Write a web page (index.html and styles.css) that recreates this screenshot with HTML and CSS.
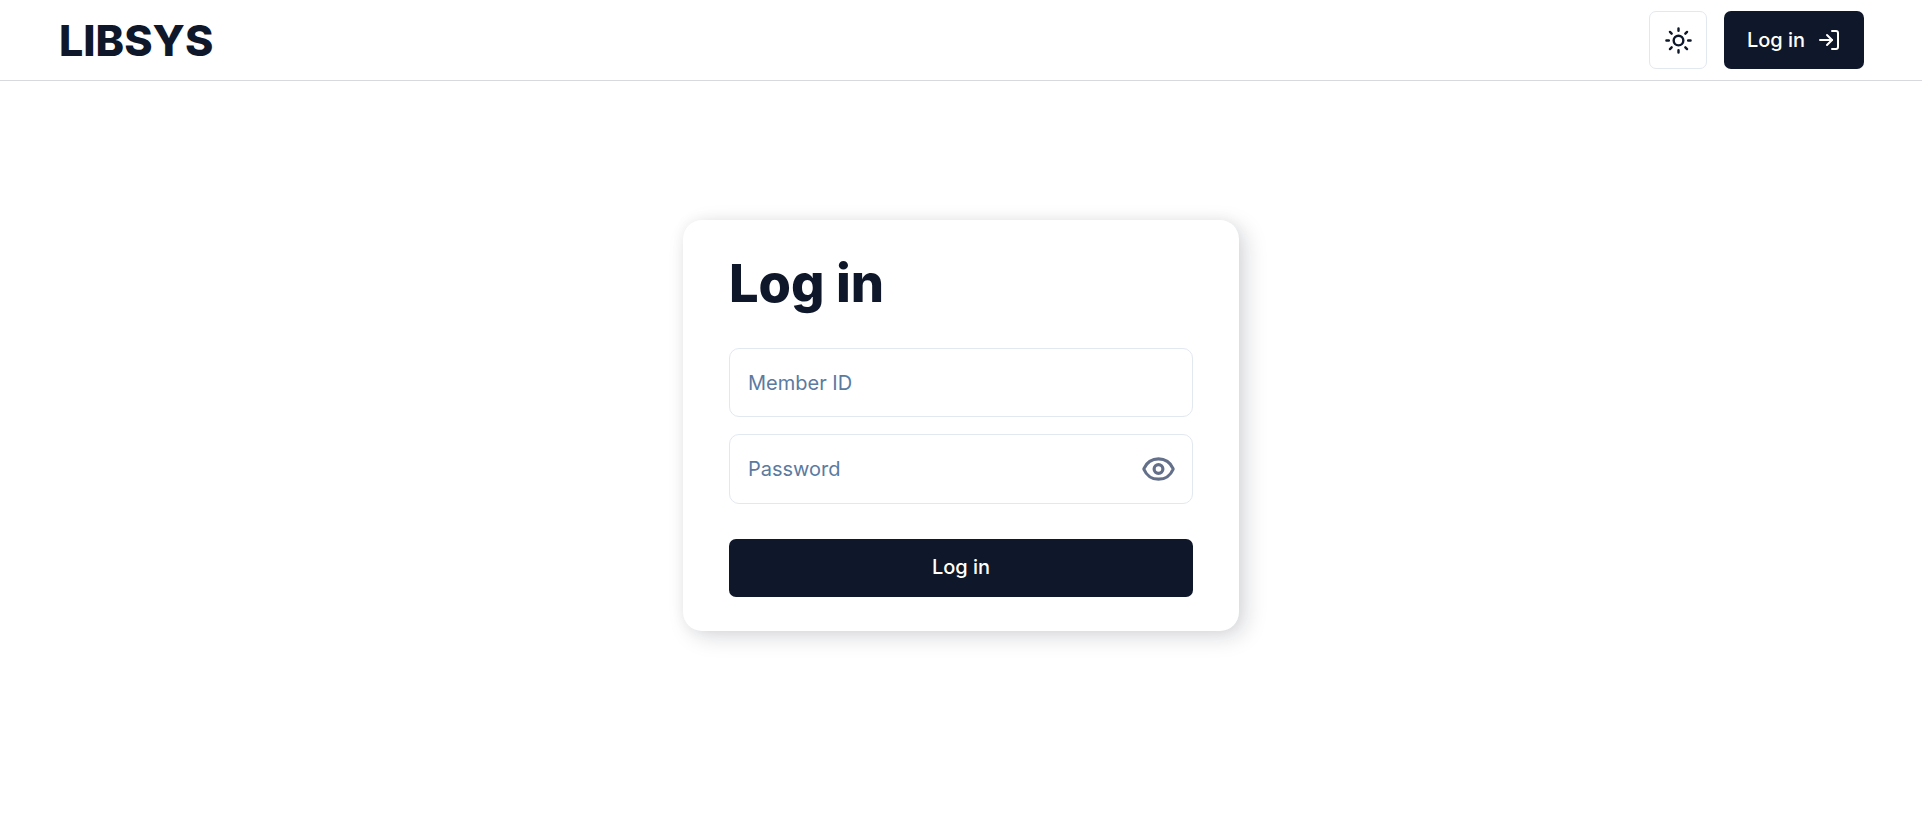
FILE: index.html
```html
<!DOCTYPE html>
<html lang="en">
<head>
<meta charset="utf-8">
<title>LIBSYS</title>
<link rel="stylesheet" href="styles.css">
</head>
<body>
<header class="navbar">
  <a class="brand" href="#">LIBSYS</a>
  <div class="nav-actions">
    <button class="theme-btn" type="button" aria-label="Toggle theme">
      <svg class="icon-sun" viewBox="0 0 24 24" fill="none" stroke="currentColor" stroke-width="2" stroke-linecap="round" stroke-linejoin="round">
        <circle cx="12" cy="12" r="4"/>
        <path d="M12 2v2M12 20v2M4.93 4.93l1.41 1.41M17.66 17.66l1.41 1.41M2 12h2M20 12h2M6.34 17.66l-1.41 1.41M19.07 4.93l-1.41 1.41"/>
      </svg>
    </button>
    <button class="primary-btn nav-login" type="button">
      <span>Log in</span>
      <svg class="icon-login" viewBox="0 0 24 24" fill="none" stroke="currentColor" stroke-width="2" stroke-linecap="round" stroke-linejoin="round">
        <path d="M15 3h4a2 2 0 0 1 2 2v14a2 2 0 0 1-2 2h-4"/>
        <path d="M10 17l5-5-5-5"/>
        <path d="M15 12H3"/>
      </svg>
    </button>
  </div>
</header>
<main class="page">
  <form class="card">
    <h1 class="card-title">Log in</h1>
    <div class="fields">
      <input class="field" type="text" placeholder="Member ID">
      <div class="password-wrap">
        <input class="field" type="password" placeholder="Password">
        <button class="eye-btn" type="button" aria-label="Show password">
          <svg class="icon-eye" viewBox="0 0 24 24" fill="none" stroke="currentColor" stroke-width="2.2" stroke-linecap="round" stroke-linejoin="round">
            <path d="M2.06 12.35a1 1 0 0 1 0-.7 10.75 10.75 0 0 1 19.88 0 1 1 0 0 1 0 .7 10.75 10.75 0 0 1-19.88 0"/>
            <circle cx="12" cy="12" r="3"/>
          </svg>
        </button>
      </div>
    </div>
    <button class="primary-btn submit" type="button">Log in</button>
  </form>
</main>
</body>
</html>
```

FILE: styles.css
```css
* { box-sizing: border-box; }
html, body { margin: 0; padding: 0; background: #fff; }
body {
  font-family: Inter, "Liberation Sans", sans-serif;
  color: #0f172a;
  min-height: 835px;
}
.navbar {
  height: 81px;
  padding: 11px 58px 0 59px;
  display: flex;
  justify-content: space-between;
  align-items: flex-start;
  border-bottom: 1px solid #d6d9de;
}
.brand {
  font-size: 43px;
  line-height: 58px;
  font-weight: 800;
  color: #0f172a;
  text-decoration: none;
}
.nav-actions { display: flex; gap: 17px; }
.theme-btn {
  width: 58px;
  height: 58px;
  padding: 0;
  display: flex;
  align-items: center;
  justify-content: center;
  background: #fff;
  color: #0f172a;
  border: 1px solid #e2e8f0;
  border-radius: 7px;
}
.icon-sun { width: 29px; height: 29px; }
.primary-btn {
  background: #0f172a;
  color: #fff;
  border: 0;
  border-radius: 7px;
  font-family: inherit;
  font-size: 20px;
  font-weight: 500;
}
.nav-login {
  width: 140px;
  height: 58px;
  display: flex;
  align-items: center;
  justify-content: center;
  gap: 12px;
}
.icon-login { width: 24px; height: 24px; }
.page {
  display: flex;
  justify-content: center;
  padding-top: 139px;
}
.card {
  width: 556px;
  height: 411px;
  padding: 30px 46px 0;
  background: #fff;
  border-radius: 19px;
  box-shadow: 7px 6px 22px 0 rgba(15, 23, 42, 0.15), 0 0 14px 0 rgba(15, 23, 42, 0.05);
}
.card-title {
  margin: 0;
  font-size: 52.4px;
  line-height: 66px;
  font-weight: 800;
  color: #0f172a;
}
.fields {
  display: flex;
  flex-direction: column;
  gap: 17px;
  margin-top: 32px;
}
.password-wrap { position: relative; }
.field {
  display: block;
  width: 100%;
  height: 69px;
  padding: 0 18px;
  background: #fff;
  border: 1px solid #e2e8f0;
  border-radius: 10px;
  font-family: inherit;
  font-size: 20px;
  color: #0f172a;
  outline: none;
}
.password-wrap .field { height: 70px; }
.field::placeholder { color: #5b7aa0; opacity: 1; }
.eye-btn {
  position: absolute;
  top: 50%;
  right: 17px;
  transform: translateY(-50%);
  padding: 0;
  display: flex;
  background: none;
  border: 0;
  color: #64708a;
}
.icon-eye { width: 35px; height: 35px; }
.submit {
  display: block;
  width: 100%;
  height: 58px;
  margin-top: 35px;
  padding: 0 0 2px;
}
```
